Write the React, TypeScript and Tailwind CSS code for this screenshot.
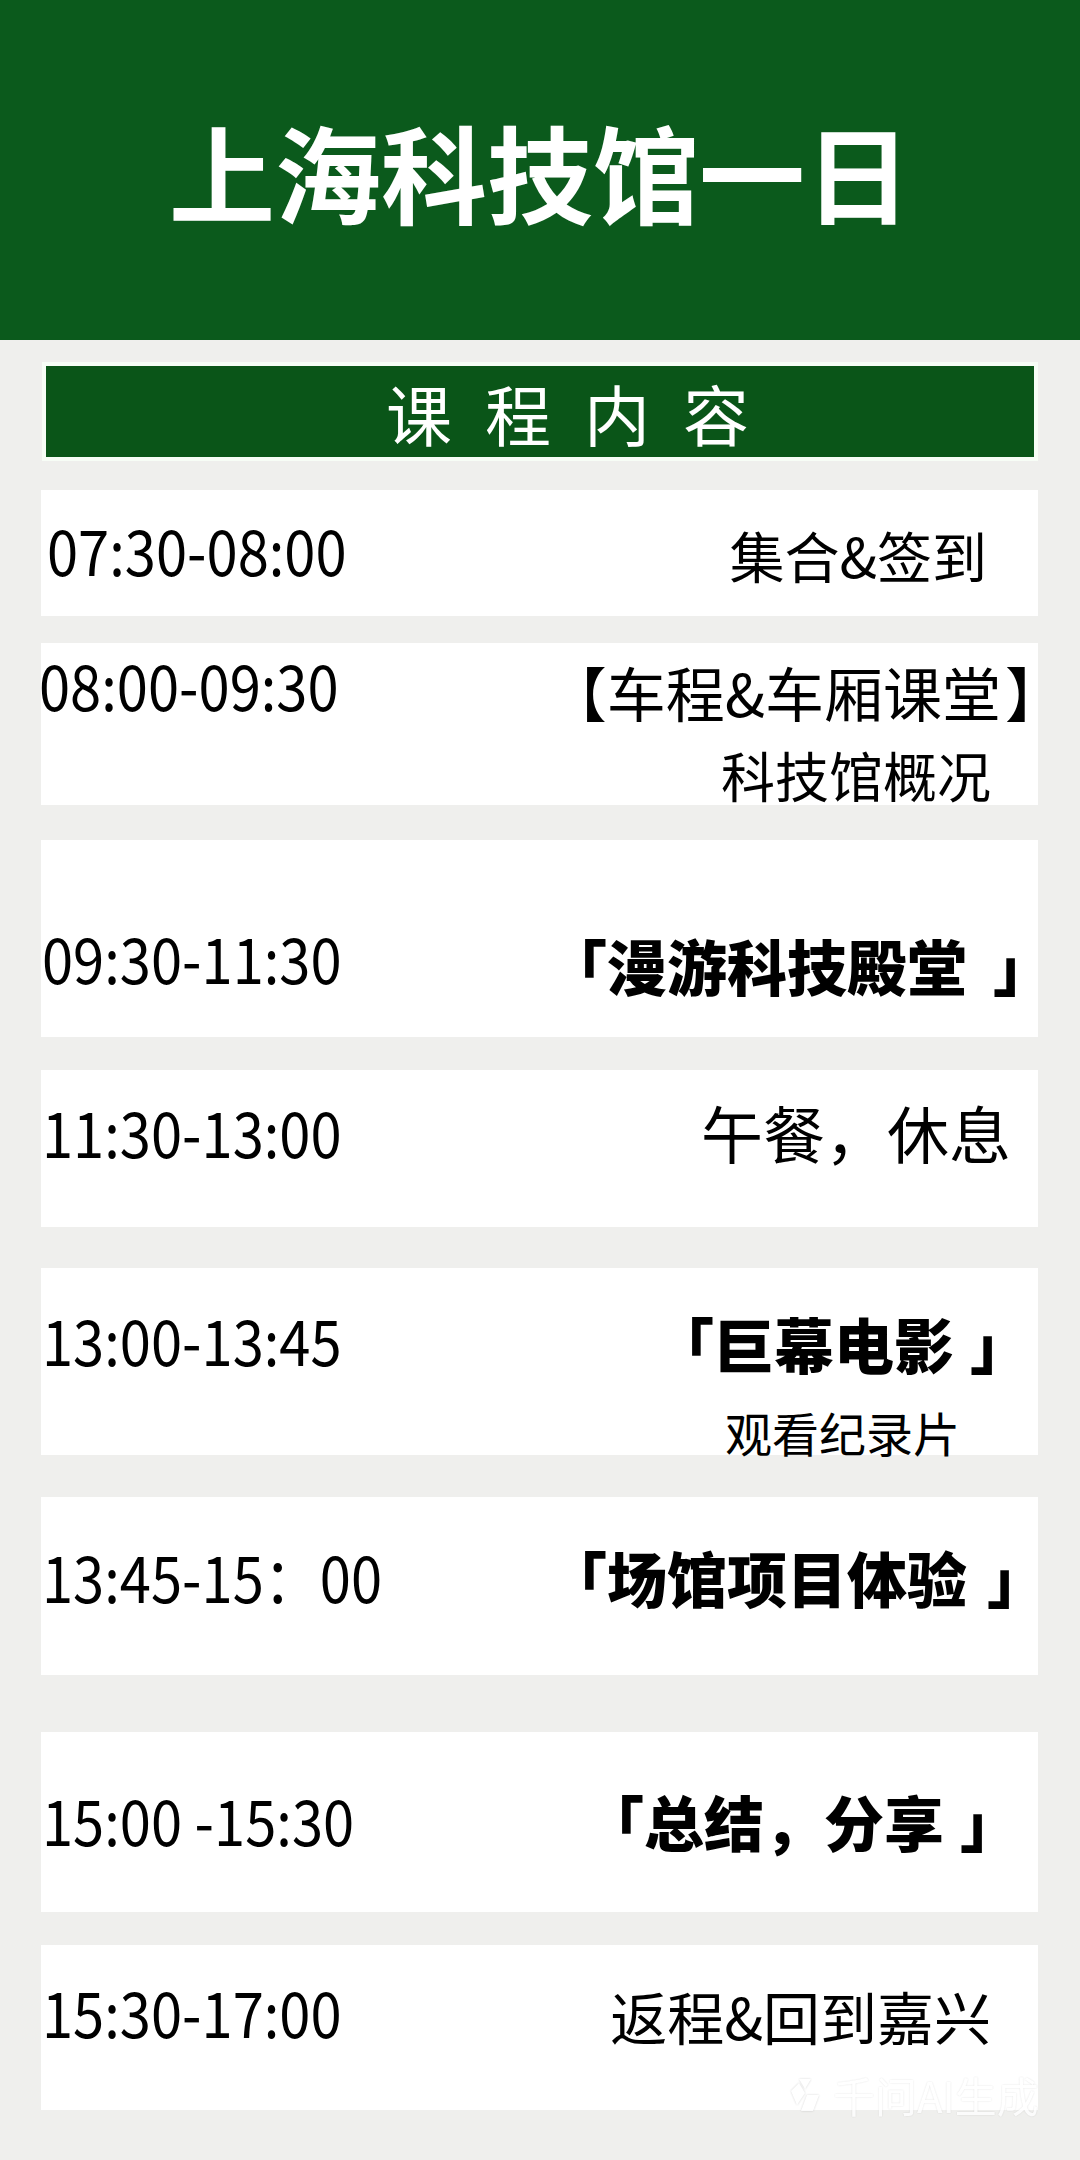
import React from "react";

const cjk = '"Noto Sans CJK SC", "Noto Sans", sans-serif';

type Line = { text: React.ReactNode; cls: string };
type Row = { card: string; time: string; timeCls: string; lines: Line[] };

const Gap = ({ w }: { w: string }) => <span className={`inline-block ${w}`} />;

const rows: Row[] = [
  {
    card: "mt-[29px] h-[126px]",
    time: "07:30-08:00",
    timeCls: "ml-[6px] mt-[27px]",
    lines: [{ text: "集合&签到", cls: "mt-[37px] mr-[51px] text-[55px]" }],
  },
  {
    card: "mt-[27px] h-[162px]",
    time: "08:00-09:30",
    timeCls: "-ml-[2px] mt-[9px]",
    lines: [
      {
        text: (
          <>
            【车程&车厢课堂
            <Gap w="w-[4px]" />】
          </>
        ),
        cls: "mt-[19px] -mr-[26px] text-[59px]",
      },
      { text: "科技馆概况", cls: "mt-[27px] mr-[47px] text-[54px]" },
    ],
  },
  {
    card: "mt-[35px] h-[197px]",
    time: "09:30-11:30",
    timeCls: "ml-[1px] mt-[85px]",
    lines: [
      {
        text: (
          <>
            「漫游科技殿堂
            <Gap w="w-[26px]" />」
          </>
        ),
        cls: "mt-[95px] -mr-[15px] text-[60px] font-black",
      },
    ],
  },
  {
    card: "mt-[33px] h-[157px]",
    time: "11:30-13:00",
    timeCls: "ml-[1px] mt-[29px]",
    lines: [{ text: "午餐，休息", cls: "mt-[31px] mr-[27px] text-[62px]" }],
  },
  {
    card: "mt-[41px] h-[187px]",
    time: "13:00-13:45",
    timeCls: "ml-[1px] mt-[39px]",
    lines: [
      {
        text: (
          <>
            「巨幕电影
            <Gap w="w-[16px]" />」
          </>
        ),
        cls: "mt-[45px] mr-[8px] text-[60px] font-black",
      },
      { text: "观看纪录片", cls: "mt-[35px] mr-[78px] text-[47px]" },
    ],
  },
  {
    card: "mt-[42px] h-[178px]",
    time: "13:45-15：00",
    timeCls: "ml-[1px] mt-[47px]",
    lines: [
      {
        text: (
          <>
            「场馆项目体验
            <Gap w="w-[20px]" />」
          </>
        ),
        cls: "mt-[50px] -mr-[9px] text-[60px] font-black",
      },
    ],
  },
  {
    card: "mt-[57px] h-[180px]",
    time: "15:00 -15:30",
    timeCls: "ml-[1px] mt-[55px]",
    lines: [
      {
        text: (
          <>
            「总结，分享
            <Gap w="w-[16px]" />」
          </>
        ),
        cls: "mt-[59px] mr-[18px] text-[60px] font-black",
      },
    ],
  },
  {
    card: "mt-[33px] h-[165px]",
    time: "15:30-17:00",
    timeCls: "ml-[1px] mt-[34px]",
    lines: [{ text: "返程&回到嘉兴", cls: "mt-[42px] mr-[47px] text-[57px]" }],
  },
];

export default function App() {
  return (
    <div
      className="relative w-[1080px] min-h-[2160px] bg-[#efefed] pb-[50px]"
      style={{ fontFamily: cjk }}
    >
      <div className="h-[340px] bg-[#0b5a1c] flex items-center justify-center">
        <h1 className="text-white text-[106px] font-bold leading-none tracking-[0px]">
          上海科技馆一日
        </h1>
      </div>

      <div className="mx-[42px] mt-[22px] h-[99px] border-4 border-[#f7fdf6] bg-[#0a5518] flex items-center pl-[340px]">
        <span className="text-white text-[66px] leading-none tracking-[33px]">课程内容</span>
      </div>

      <div className="flex flex-col mx-[41px] w-[997px]">
        {rows.map((r, i) => (
          <div key={i} className={`bg-white flex items-start text-black ${r.card}`}>
            <div className={`shrink-0 w-[300px] ${r.timeCls}`}>
              <div className="text-[63px] leading-none whitespace-pre origin-left scale-x-[0.89]">
                {r.time}
              </div>
            </div>
            <div className="flex-1 flex flex-col items-end">
              {r.lines.map((l, j) => (
                <div key={j} className={`leading-none whitespace-pre ${l.cls}`}>
                  {l.text}
                </div>
              ))}
            </div>
          </div>
        ))}
      </div>

      <div className="absolute left-[785px] top-[2074px] flex items-center gap-[8px] opacity-80">
        <svg width="40" height="40" viewBox="0 0 40 40" className="drop-shadow-[0_0_1px_rgba(0,0,0,0.2)]">
          <path d="M14 4 L26 4 L20 14 Z" fill="#ffffff" />
          <path d="M6 16 L14 8 L20 18 L12 30 Z" fill="#ffffff" />
          <path d="M22 20 L34 20 L28 36 L16 36 Z" fill="#ffffff" />
        </svg>
        <span className="text-white text-[42px] leading-none [text-shadow:0_0_2px_rgba(0,0,0,0.15)]">
          千问AI生成
        </span>
      </div>
    </div>
  );
}
